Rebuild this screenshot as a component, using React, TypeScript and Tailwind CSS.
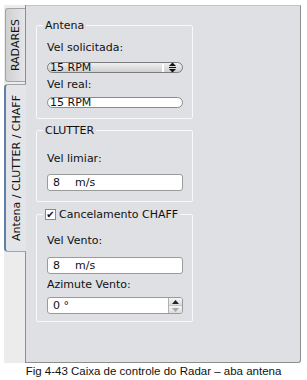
import React from "react";

// small spin arrows drawn inside the "Vel solicitada" bar
const SpinArrows = () => (
  <svg width="9" height="11" viewBox="0 0 9 11">
    <path d="M4.5 0.5 L8 4 L1 4 Z" fill="#111" />
    <rect x="1" y="5" width="7" height="1" fill="#111" />
    <path d="M1 7 L8 7 L4.5 10.5 Z" fill="#111" />
  </svg>
);

const Field = ({ value, unit }: { value: string; unit?: string }) => (
  <div className="h-[17px] flex items-center border border-[#9a9a9a] rounded-[3px] bg-white pl-[5px] leading-[13px]">
    <span className="w-[22px]">{value}</span>
    {unit && <span>{unit}</span>}
  </div>
);

const Group = ({
  title,
  children,
  className,
}: {
  title: React.ReactNode;
  children: React.ReactNode;
  className?: string;
}) => (
  <fieldset
    className={`w-[157px] border border-[#f9f9f9] rounded-[2px] ${className ?? ""}`}
  >
    <legend className="ml-[6px] px-[2px] leading-[13px]">{title}</legend>
    <div className="flex flex-col pl-[10px] pr-[9px]">{children}</div>
  </fieldset>
);

export default function App() {
  return (
    <div className="w-[307px] h-[380px] bg-white text-[11px] text-[#111] font-['DejaVu_Sans',sans-serif]">
      <div className="flex pt-[5px] pl-[4px] w-[301px] h-[363px]">
        {/* tab column */}
        <div className="w-[22px] flex flex-col bg-[#ececec] border-r border-[#8d8d8d]">
          <div className="mt-[3px] ml-[1px] h-[74px] rounded-l-[3px] border border-r-0 border-[#a3a3a3] bg-gradient-to-r from-[#cfd0d3] to-[#e6e6e8] flex items-center justify-center">
            <span className="[writing-mode:vertical-rl] rotate-180 leading-[13px]">
              RADARES
            </span>
          </div>
          <div className="relative z-10 mt-[2px] -mr-px h-[168px] rounded-l-[4px] border-l-[2px] border-y border-[#5f7fa6] border-y-[#a3a3a3] bg-[#e4e5e8] flex items-center justify-center">
            <span className="[writing-mode:vertical-rl] rotate-180 leading-[13px]">
              Antena / CLUTTER / CHAFF
            </span>
          </div>
        </div>

        {/* panel */}
        <div className="flex-1 bg-[#dfe0e3] border border-l-0 border-[#8d8d8d] border-t-[#c4c4c6] rounded-br-[3px] pt-[13px] pl-[10px]">
          <Group title="Antena">
            <span className="mt-[9px] leading-[13px]">Vel solicitada:</span>
            <div className="mt-[8px] h-[11px] flex items-center rounded-full border border-[#7c7c7c] bg-gradient-to-b from-[#f0f0f0] to-[#cfcfd1] pl-[2px] pr-[5px]">
              <span className="flex-1 leading-[11px]">15 RPM</span>
              <div className="w-[2px] h-[8px] bg-white mr-[4px]" />
              <SpinArrows />
            </div>
            <span className="mt-[5px] leading-[13px]">Vel real:</span>
            <div className="mt-[6px] mb-[10px] h-[11px] flex items-center rounded-full border border-[#8a8a8a] bg-white pl-[2px]">
              <span className="leading-[11px]">15 RPM</span>
            </div>
          </Group>

          <Group title="CLUTTER" className="mt-[5px]">
            <span className="mt-[15px] leading-[13px]">Vel limiar:</span>
            <div className="mt-[9px] mb-[10px]">
              <Field value="8" unit="m/s" />
            </div>
          </Group>

          <Group
            className="mt-[6px]"
            title={
              <span className="flex items-center gap-[3px]">
                <span className="w-[11px] h-[11px] border border-[#8a8a8a] bg-white flex items-center justify-center text-[10px] leading-none">
                  ✔
                </span>
                Cancelamento CHAFF
              </span>
            }
          >
            <span className="mt-[13px] leading-[13px]">Vel Vento:</span>
            <div className="mt-[10px]">
              <Field value="8" unit="m/s" />
            </div>
            <span className="mt-[4px] leading-[13px]">Azimute Vento:</span>
            <div className="mt-[6px] mb-[7px] h-[17px] flex border border-[#9a9a9a] rounded-[3px] bg-white">
              <span className="flex-1 pl-[5px] leading-[15px]">0 °</span>
              <div className="w-[14px] flex flex-col border-l border-[#b0b0b0]">
                <div className="flex-1 flex items-center justify-center bg-gradient-to-b from-[#f4f4f4] to-[#dcdcdc] border-b border-[#c4c4c4] rounded-tr-[2px]">
                  <svg width="7" height="4" viewBox="0 0 7 4">
                    <path d="M3.5 0 L7 4 L0 4 Z" fill="#222" />
                  </svg>
                </div>
                <div className="flex-1 flex items-center justify-center bg-gradient-to-b from-[#f4f4f4] to-[#dcdcdc] rounded-br-[2px]">
                  <svg width="7" height="4" viewBox="0 0 7 4">
                    <path d="M0 0 L7 0 L3.5 4 Z" fill="#a8a8a8" />
                  </svg>
                </div>
              </div>
            </div>
          </Group>
        </div>
      </div>
      <p className="text-center text-[11.5px] leading-[14px] font-['Liberation_Sans',Arial,sans-serif] mt-[1px]">
        Fig 4-43 Caixa de controle do Radar – aba antena
      </p>
    </div>
  );
}
